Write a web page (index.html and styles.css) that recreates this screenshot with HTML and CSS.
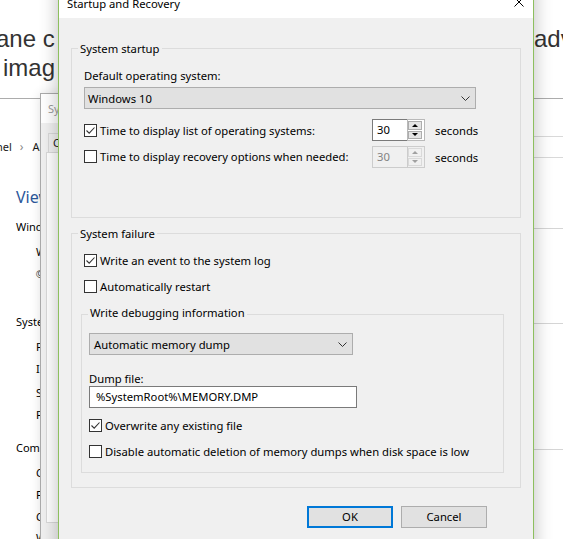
FILE: index.html
```html
<!DOCTYPE html>
<html lang="en">
<head>
<meta charset="utf-8">
<title>Startup and Recovery</title>
<link rel="stylesheet" href="styles.css">
</head>
<body>
<div class="screen">
  <div class="article">
    <div class="hline hline1"><span class="hl-left">ane c</span><span class="hl-right">adv</span></div>
    <div class="hline hline2">imag</div>
  </div>

  <div class="cpanel">
    <div class="addr">
      <div class="crumbs"><span class="crumb-cut">nel</span><span class="sep">&#8250;</span><span>All Control Panel Items</span></div>
      <div class="search"></div>
    </div>
    <div class="cp-body">
      <div class="cp-title">View basic information</div>
      <div class="cp-sec cp-sec1"><span>Windows edition</span><i class="rule"></i></div>
      <div class="cp-item cp-first">Windows 10 Pro</div>
      <div class="cp-item"><span class="copy">©</span> 2015 Microsoft</div>
      <div class="cp-sec cp-sec2"><span>System</span><i class="rule"></i></div>
      <div class="cp-item cp-first">Processor:</div>
      <div class="cp-item">Installed memory:</div>
      <div class="cp-item cp-s">System type:</div>
      <div class="cp-item">Pen and Touch:</div>
      <div class="cp-sec cp-sec3"><span>Computer name</span><i class="rule"></i></div>
      <div class="cp-item cp-first">Computer name:</div>
      <div class="cp-item">Full computer name:</div>
      <div class="cp-item">Computer description:</div>
      <div class="cp-item cp-w">Workgroup:</div>
    </div>
  </div>

  <div class="sysprop">
    <div class="sp-title">System Properties</div>
    <div class="sp-body">
      <div class="tabs"><div class="tab">Computer Name</div></div>
      <div class="tabpanel"></div>
    </div>
  </div>

  <div class="dialog">
    <div class="titlebar">
      <span class="title">Startup and Recovery</span>
      <svg class="close" width="10" height="10" viewBox="0 0 10 10"><path d="M0.5 0.5 L9.5 9.5 M9.5 0.5 L0.5 9.5" stroke="#000" stroke-width="1" fill="none"/></svg>
    </div>
    <div class="dbody">
      <div class="group group1">
        <div class="gtitle">System startup</div>
        <div class="label label-os">Default operating system:</div>
        <div class="select select-os"><span>Windows 10</span><svg class="chev" width="9" height="5" viewBox="0 0 9 5"><polyline points="0.5,0.5 4.5,4.5 8.5,0.5" fill="none" stroke="#333" stroke-width="1"/></svg></div>
        <div class="row row1">
          <div class="cbwrap">
            <span class="cb"><svg width="11" height="11" viewBox="0 0 11 11"><polyline points="1.5,5.5 4.2,8.2 9.5,2.5" fill="none" stroke="#333" stroke-width="1.1"/></svg></span>
            <span>Time to display list of operating systems:</span>
          </div>
          <div class="spin">
            <div class="spin-edit">30</div>
            <div class="spin-btns"><span class="sbtn"><i class="tri-up"></i></span><span class="sbtn"><i class="tri-down"></i></span></div>
          </div>
          <span class="secs">seconds</span>
        </div>
        <div class="row row2">
          <div class="cbwrap">
            <span class="cb"></span>
            <span>Time to display recovery options when needed:</span>
          </div>
          <div class="spin spin-disabled">
            <div class="spin-edit">30</div>
            <div class="spin-btns"><span class="sbtn"><i class="tri-up"></i></span><span class="sbtn"><i class="tri-down"></i></span></div>
          </div>
          <span class="secs">seconds</span>
        </div>
      </div>

      <div class="group group2">
        <div class="gtitle">System failure</div>
        <div class="check check-log">
          <span class="cb"><svg width="11" height="11" viewBox="0 0 11 11"><polyline points="1.5,5.5 4.2,8.2 9.5,2.5" fill="none" stroke="#333" stroke-width="1.1"/></svg></span>
          <span>Write an event to the system log</span>
        </div>
        <div class="check check-restart">
          <span class="cb"></span>
          <span>Automatically restart</span>
        </div>
        <div class="subgroup">
          <div class="gtitle subtitle">Write debugging information</div>
          <div class="select select-dump"><span>Automatic memory dump</span><svg class="chev" width="9" height="5" viewBox="0 0 9 5"><polyline points="0.5,0.5 4.5,4.5 8.5,0.5" fill="none" stroke="#333" stroke-width="1"/></svg></div>
          <div class="label label-dump">Dump file:</div>
          <div class="textfield">%SystemRoot%\MEMORY.DMP</div>
          <div class="check check-overwrite">
            <span class="cb"><svg width="11" height="11" viewBox="0 0 11 11"><polyline points="1.5,5.5 4.2,8.2 9.5,2.5" fill="none" stroke="#333" stroke-width="1.1"/></svg></span>
            <span>Overwrite any existing file</span>
          </div>
          <div class="check check-disable">
            <span class="cb"></span>
            <span>Disable automatic deletion of memory dumps when disk space is low</span>
          </div>
        </div>
      </div>

      <div class="buttons">
        <button class="btn btn-ok">OK</button>
        <button class="btn">Cancel</button>
      </div>
    </div>
  </div>
</div>
</body>
</html>
```
FILE: styles.css
```css
html, body {
  margin: 0;
  padding: 0;
}
body {
  width: 563px;
  height: 539px;
  overflow: hidden;
  background: #ffffff;
}
.screen {
  position: relative;
  width: 563px;
  height: 539px;
  overflow: hidden;
  font-family: "Noto Sans", "Open Sans", sans-serif;
  font-size: 11px;
  color: #000;
}

/* background article */
.article {
  padding-top: 24px;
  font-family: "Liberation Sans", Arial, sans-serif;
  font-size: 24px;
  line-height: 29px;
  color: #333;
  white-space: nowrap;
}
.hline1 {
  display: flex;
  margin-left: -4px;
}
.hl-left {
  width: 538px;
  flex: none;
}
.hline2 {
  padding-left: 3px;
}

/* control panel window */
.cpanel {
  margin-top: 16px;
  width: 720px;
  height: 460px;
  border-top: 1px solid #acacac;
  background: #fff;
}
.addr {
  margin-top: 37px;
  height: 22px;
  display: flex;
  align-items: center;
}
.crumbs {
  display: flex;
  align-items: center;
  color: #1a1a1a;
  line-height: 16px;
}
.crumb-cut {
  margin-left: -4px;
}
.sep {
  margin: 0 9px 0 8px;
  color: #8a8a8a;
  font-size: 12px;
}
.search {
  margin-left: auto;
  margin-right: 10px;
  width: 220px;
  height: 22px;
  box-sizing: border-box;
  border: 1px solid #d9d9d9;
}
.cp-body {
  padding-left: 16px;
  line-height: 22px;
}
.cp-title {
  margin-top: 28px;
  font-size: 16px;
  color: #2b579a;
  white-space: nowrap;
}
.cp-sec {
  display: flex;
  align-items: center;
  white-space: nowrap;
}
.cp-sec .rule {
  flex: 1;
  margin-left: 8px;
  margin-top: 3px;
  border-top: 1px solid #d5d5d5;
}
.cp-sec1 { margin-top: 8px; }
.cp-sec2 { margin-top: 26px; }
.cp-sec3 { margin-top: 11px; }
.cp-item {
  padding-left: 20px;
  white-space: nowrap;
}
.copy {
  font-family: "Liberation Sans", Arial, sans-serif;
  font-variant-emoji: text;
  color: #333;
}
.cp-first { margin-top: 3px; }
.cp-s { margin-top: 2px; }
.cp-w { margin-top: -1px; }

/* system properties window */
.sysprop {
  position: absolute;
  left: 40px;
  top: 93px;
  width: 430px;
  height: 470px;
  box-sizing: border-box;
  border: 1px solid #aaaaaa;
  background: #f0f0f0;
  box-shadow: 0 0 10px rgba(0,0,0,0.12);
}
.sp-title {
  height: 29px;
  background: #fff;
  padding-left: 7px;
  display: flex;
  align-items: center;
  color: #9a9a9a;
}
.sp-body {
  padding: 10px 0 0 5px;
}
.tabs {
  display: flex;
  padding-left: 2px;
}
.tab {
  height: 19px;
  box-sizing: border-box;
  border: 1px solid #d9d9d9;
  border-bottom: 0;
  padding: 0 6px 0 4px;
  line-height: 17px;
  color: #1a1a1a;
  background: #f0f0f0;
}
.tabpanel {
  height: 371px;
  box-sizing: border-box;
  border: 1px solid #d9d9d9;
  background: #fff;
}

/* main dialog */
.dialog {
  position: absolute;
  left: 58px;
  top: -13px;
  width: 476px;
  height: 600px;
  box-sizing: border-box;
  border: 1px solid #8dbf5e;
  background: #f0f0f0;
  box-shadow: 0 0 16px 2px rgba(0,0,0,0.22);
  font-size: 11.25px;
}
.titlebar {
  height: 30px;
  background: #fff;
  display: flex;
  align-items: center;
  padding-left: 8px;
}
.close {
  margin-left: auto;
  margin-right: 9px;
  margin-bottom: 2px;
}
.dbody {
  padding: 30px 12px 0 12px;
}
.group {
  box-sizing: border-box;
  border: 1px solid #dcdcdc;
  padding: 0 12px;
}
.group1 { height: 170px; }
.group2 { height: 255px; margin-top: 15px; }
.gtitle {
  width: fit-content;
  margin: -8px 0 0 -6px;
  padding: 0 2px;
  background: #f0f0f0;
  line-height: 16px;
  white-space: nowrap;
}
.label {
  line-height: 16px;
}
.label-os { margin-top: 11px; }
.select {
  box-sizing: border-box;
  height: 22px;
  border: 1px solid #adadad;
  background: #e1e1e1;
  display: flex;
  align-items: center;
  justify-content: space-between;
  padding: 0 5px 0 3px;
}
.select-os { margin-top: 3px; width: 392px; }
.select-dump { margin-top: 12px; width: 264px; padding-left: 4px; }
.chev { display: block; }

.row {
  display: flex;
  align-items: center;
  height: 22px;
}
.row1 { margin-top: 10px; }
.row2 { margin-top: 5px; }
.cbwrap {
  width: 288px;
  display: flex;
  align-items: center;
  white-space: nowrap;
}
.row2 .cbwrap { margin-top: -2px; }
.cb {
  flex: none;
  width: 13px;
  height: 13px;
  box-sizing: border-box;
  border: 1px solid #333;
  background: #fff;
  margin-right: 3px;
}
.cb svg { display: block; }
.spin {
  display: flex;
  width: 53px;
  height: 22px;
  flex: none;
}
.spin-edit {
  width: 35px;
  box-sizing: border-box;
  border: 1px solid #7a7a7a;
  border-right: 0;
  background: #fff;
  padding-left: 4px;
  line-height: 20px;
}
.spin-btns {
  width: 18px;
  box-sizing: border-box;
  border: 1px solid #b9b9b9;
  background: #fff;
  padding: 1px 2px 1px 0;
  display: flex;
  flex-direction: column;
  gap: 1px;
}
.sbtn {
  flex: 1;
  box-sizing: border-box;
  border: 1px solid #adadad;
  background: #e5e5e5;
  display: flex;
  align-items: center;
  justify-content: center;
}
.tri-up, .tri-down {
  width: 0;
  height: 0;
  border-left: 3px solid transparent;
  border-right: 3px solid transparent;
}
.tri-up { border-bottom: 3px solid #000; }
.tri-down { border-top: 3px solid #000; }
.spin-disabled .spin-edit {
  border-color: #cccccc;
  background: #f0f0f0;
  color: #838383;
}
.spin-disabled .spin-btns {
  border-color: #cccccc;
  background: #f0f0f0;
}
.spin-disabled .sbtn {
  border-color: #d9d9d9;
  background: #f0f0f0;
}
.spin-disabled .tri-up { border-bottom-color: #a0a0a0; }
.spin-disabled .tri-down { border-top-color: #a0a0a0; }
.secs {
  margin-left: 10px;
}

.check {
  display: flex;
  align-items: center;
  height: 16px;
  white-space: nowrap;
}
.check-log { margin-top: 10px; }
.check-restart { margin-top: 10px; }
.subgroup {
  margin: 20px 0 0 -3px;
  width: 423px;
  height: 159px;
  box-sizing: border-box;
  border: 1px solid #dcdcdc;
  padding: 0 7px;
}
.subtitle { margin-left: -1px; margin-top: -10px; }
.label-dump { margin-top: 16px; }
.textfield {
  margin-top: -1px;
  width: 268px;
  height: 22px;
  box-sizing: border-box;
  border: 1px solid #7a7a7a;
  background: #fff;
  padding-left: 6px;
  line-height: 20px;
}
.check-overwrite { margin-top: 9px; }
.check-disable { margin-top: 10px; }

.buttons {
  margin-top: 18px;
  display: flex;
  justify-content: flex-end;
  gap: 8px;
  padding-right: 34px;
}
.btn {
  width: 86px;
  height: 22px;
  box-sizing: border-box;
  border: 1px solid #adadad;
  background: #e1e1e1;
  font-family: "Noto Sans", "Open Sans", sans-serif;
  font-size: 11.25px;
  color: #000;
  padding: 0;
  line-height: 18px;
}
.btn-ok {
  border: 2px solid #0078d7;
}
```
